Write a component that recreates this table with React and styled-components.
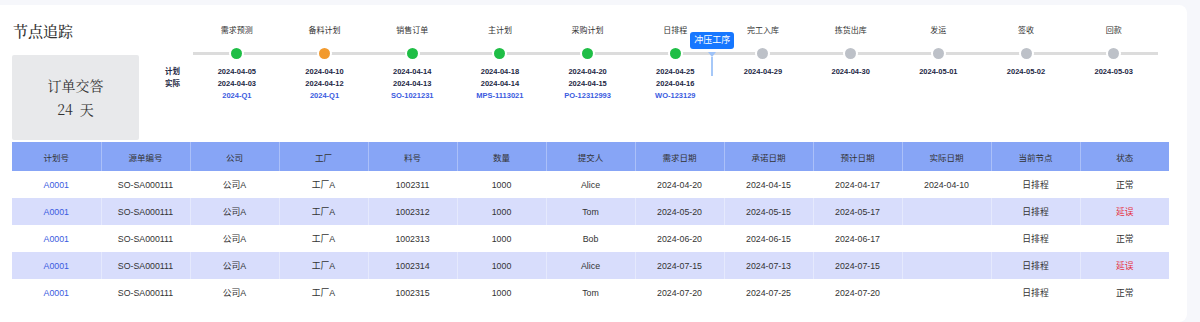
import React from 'react'
import styled, { createGlobalStyle } from 'styled-components'

const GlobalStyle = createGlobalStyle`
    body {
        margin: 0;
        background: #f6f7fb;
        font-family: "Liberation Sans", "Noto Sans CJK SC", sans-serif;
        color: #333;
    }
    #root {
        padding-top: 5px;
    }
`

const nodes = [
    { name: '需求预测', plan: '2024-04-05', actual: '2024-04-03', code: '2024-Q1', status: 'done' },
    { name: '备料计划', plan: '2024-04-10', actual: '2024-04-12', code: '2024-Q1', status: 'late' },
    { name: '销售订单', plan: '2024-04-14', actual: '2024-04-13', code: 'SO-1021231', status: 'done' },
    { name: '主计划', plan: '2024-04-18', actual: '2024-04-14', code: 'MPS-1113021', status: 'done' },
    { name: '采购计划', plan: '2024-04-20', actual: '2024-04-15', code: 'PO-12312993', status: 'done' },
    { name: '日排程', plan: '2024-04-25', actual: '2024-04-16', code: 'WO-123129', status: 'done', marker: '冲压工序' },
    { name: '完工入库', plan: '2024-04-29', status: 'todo' },
    { name: '拣货出库', plan: '2024-04-30', status: 'todo' },
    { name: '发运', plan: '2024-05-01', status: 'todo' },
    { name: '签收', plan: '2024-05-02', status: 'todo' },
    { name: '回款', plan: '2024-05-03', status: 'todo' },
]

const columns = ['计划号', '源单编号', '公司', '工厂', '料号', '数量', '提交人', '需求日期', '承诺日期', '预计日期', '实际日期', '当前节点', '状态']

const rows = [
    ['1002311', 'Alice', '2024-04-20', '2024-04-15', '2024-04-17', '2024-04-10', '正常'],
    ['1002312', 'Tom', '2024-05-20', '2024-05-15', '2024-05-17', '', '延误'],
    ['1002313', 'Bob', '2024-06-20', '2024-06-15', '2024-06-17', '', '正常'],
    ['1002314', 'Alice', '2024-07-15', '2024-07-13', '2024-07-15', '', '延误'],
    ['1002315', 'Tom', '2024-07-20', '2024-07-25', '2024-07-20', '', '正常'],
]

const dotColors = {
    done: '#1fbe46',
    late: '#f29a2e',
    todo: '#bdc1c8',
}

const App = () => {
    return (
        <>
            <GlobalStyle />
            <Card>
                <Top>
                    <LeftCol>
                        <Title>节点追踪</Title>
                        <SummaryBox>
                            <SummaryText>订单交答</SummaryText>
                            <SummaryText>24&nbsp; 天</SummaryText>
                        </SummaryBox>
                    </LeftCol>
                    <Timeline>
                        <RowLabels>
                            <RowLabel>计划</RowLabel>
                            <RowLabel>实际</RowLabel>
                        </RowLabels>
                        {nodes.map((n) => (
                            <Node key={n.name}>
                                <NodeName>{n.name}</NodeName>
                                <Track>
                                    <Dot color={dotColors[n.status]} />
                                    {n.marker && (
                                        <Marker>
                                            <MarkerTag>{n.marker}</MarkerTag>
                                            <MarkerArrow />
                                            <MarkerStem />
                                        </Marker>
                                    )}
                                </Track>
                                <DateText>{n.plan}</DateText>
                                {n.actual && <DateText>{n.actual}</DateText>}
                                {n.code && <CodeText>{n.code}</CodeText>}
                            </Node>
                        ))}
                    </Timeline>
                </Top>

                <Table>
                    <thead>
                        <tr>
                            {columns.map((c) => <Th key={c}>{c}</Th>)}
                        </tr>
                    </thead>
                    <tbody>
                        {rows.map((r, i) => (
                            <Tr key={r[0]} striped={i % 2 === 1}>
                                <Td><LinkText>A0001</LinkText></Td>
                                <Td>SO-SA000111</Td>
                                <Td>公司A</Td>
                                <Td>工厂A</Td>
                                <Td>{r[0]}</Td>
                                <Td>1000</Td>
                                <Td>{r[1]}</Td>
                                <Td>{r[2]}</Td>
                                <Td>{r[3]}</Td>
                                <Td>{r[4]}</Td>
                                <Td>{r[5]}</Td>
                                <Td>日排程</Td>
                                <Td><Status late={r[6] === '延误'}>{r[6]}</Status></Td>
                            </Tr>
                        ))}
                    </tbody>
                </Table>
            </Card>
        </>
    )
}

const Card = styled.div`
    width: 1187px;
    height: 317px;
    box-sizing: border-box;
    background: #fff;
    border-radius: 0 8px 8px 0;
    padding: 15px 0 0 12px;
`

const Top = styled.div`
    display: flex;
    align-items: flex-start;
`

const LeftCol = styled.div`
    width: 127px;
    display: flex;
    flex-direction: column;
`

const Title = styled.div`
    font-family: "Noto Serif CJK SC", "Noto Sans CJK SC", serif;
    font-size: 15px;
    font-weight: 500;
    line-height: 22px;
    color: #333;
    padding-left: 1px;
`

const SummaryBox = styled.div`
    margin-top: 13px;
    height: 85px;
    background: #e8e9eb;
    border-radius: 2px;
    display: flex;
    flex-direction: column;
    align-items: center;
    justify-content: center;
    gap: 6px;
    padding-bottom: 2px;
    box-sizing: border-box;
`

const SummaryText = styled.div`
    font-family: "Noto Serif CJK SC", "Noto Sans CJK SC", serif;
    font-size: 14px;
    line-height: 18px;
    color: #333;
`

const Timeline = styled.div`
    margin-left: 21px;
    display: grid;
    grid-template-columns: 33px repeat(11, 87.7px);
    margin-top: 5px;
`

const RowLabels = styled.div`
    padding-top: 41px;
    padding-left: 5px;
`

const RowLabel = styled.div`
    font-size: 7.5px;
    font-weight: 700;
    line-height: 12px;
    color: #232744;
`

const Node = styled.div`
    display: flex;
    flex-direction: column;
    align-items: center;
`

const NodeName = styled.div`
    font-size: 8px;
    line-height: 12px;
    color: #333;
`

const Track = styled.div`
    position: relative;
    width: 100%;
    height: 12px;
    margin-top: 10px;
    margin-bottom: 7px;
    display: flex;
    align-items: center;
    justify-content: center;
    &::before {
        content: '';
        position: absolute;
        left: 0;
        right: 0;
        top: 5px;
        height: 3px;
        background: #dcdcdc;
    }
`

const Dot = styled.div`
    position: relative;
    width: 11px;
    height: 11px;
    border-radius: 50%;
    background: ${(p) => p.color};
    box-shadow: 0 0 0 2px #fff;
`

const Marker = styled.div`
    position: absolute;
    left: calc(50% + 15px);
    top: -15px;
    width: 44px;
    display: flex;
    flex-direction: column;
    align-items: center;
`

const MarkerTag = styled.div`
    width: 44px;
    height: 17px;
    background: #1677ff;
    border-radius: 3px;
    color: #fff;
    font-size: 9px;
    line-height: 17px;
    text-align: center;
`

const MarkerArrow = styled.div`
    margin-top: 3px;
    width: 0;
    height: 0;
    border-left: 4px solid transparent;
    border-right: 4px solid transparent;
    border-top: 5px solid #9ec2f7;
`

const MarkerStem = styled.div`
    width: 2px;
    height: 19px;
    background: #a6c8f8;
`

const DateText = styled.div`
    font-size: 7.5px;
    font-weight: 700;
    line-height: 12px;
    color: #232744;
`

const CodeText = styled.div`
    font-size: 7.5px;
    font-weight: 700;
    line-height: 12px;
    color: #3a5be0;
`

const Table = styled.table`
    margin-top: 2px;
    width: 1157px;
    border-collapse: collapse;
    table-layout: fixed;
`

const Th = styled.th`
    height: 29px;
    padding: 0;
    background: #87a5f6;
    font-size: 8.5px;
    font-weight: 400;
    color: #333;
    text-align: center;
    border-right: 1px solid rgba(255, 255, 255, 0.3);
    &:last-child {
        border-right: none;
    }
`

const Tr = styled.tr`
    background: ${(p) => (p.striped ? '#d8ddfc' : '#fff')};
`

const Td = styled.td`
    height: 27px;
    padding: 0;
    font-size: 8.8px;
    color: #333;
    text-align: center;
    border-right: 1px solid rgba(255, 255, 255, 0.35);
    &:last-child {
        border-right: none;
    }
`

const LinkText = styled.span`
    color: #3a5be0;
`

const Status = styled.span`
    color: ${(p) => (p.late ? '#e5323f' : '#333')};
`

export default App
